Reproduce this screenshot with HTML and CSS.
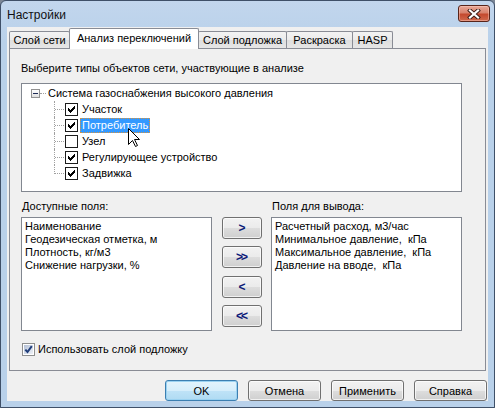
FILE: index.html
```html
<!DOCTYPE html>
<html lang="ru">
<head>
<meta charset="utf-8">
<title>Настройки</title>
<link rel="stylesheet" href="styles.css">
</head>
<body>
<div class="window">
  <div class="titlebar">
    <span class="title">Настройки</span>
    <span class="close-btn">
      <svg width="14" height="10" viewBox="0 0 14 10"><path d="M3 1.5 L11 8.5 M11 1.5 L3 8.5" stroke="#3a1a14" stroke-width="4" stroke-linecap="square"/><path d="M3 1.5 L11 8.5 M11 1.5 L3 8.5" stroke="#fff" stroke-width="2.2" stroke-linecap="square"/></svg>
    </span>
  </div>
  <div class="client">
    <div class="tabs">
      <div class="tab t1">Слой сети</div>
      <div class="tab t2 active">Анализ переключений</div>
      <div class="tab t3">Слой подложка</div>
      <div class="tab t4">Раскраска</div>
      <div class="tab t5">HASP</div>
    </div>
    <div class="panel">
      <div class="caption">Выберите типы объектов сети, участвующие в анализе</div>
      <div class="tree">
        <div class="tree-root">
          <span class="expander"><span class="minus"></span></span>
          <span class="root-dots"></span>
          <span class="node-label">Система газоснабжения высокого давления</span>
        </div>
        <ul class="tree-children">
          <li class="tree-node"><span class="branch"></span><svg class="chk" width="13" height="13" viewBox="0 0 13 13" shape-rendering="crispEdges"><rect x="0.5" y="0.5" width="12" height="12" fill="#fff" stroke="#1c1c1c"/><path d="M9,3h1v1h-1z M8,4h2v1h-2z M3,5h1v1h-1z M7,5h3v1h-3z M3,6h2v1h-2z M6,6h3v1h-3z M3,7h5v1h-5z M4,8h3v1h-3z M5,9h1v1h-1z" fill="#000"/></svg><span class="node-label">Участок</span></li>
          <li class="tree-node"><span class="branch"></span><svg class="chk" width="13" height="13" viewBox="0 0 13 13" shape-rendering="crispEdges"><rect x="0.5" y="0.5" width="12" height="12" fill="#fff" stroke="#1c1c1c"/><path d="M9,3h1v1h-1z M8,4h2v1h-2z M3,5h1v1h-1z M7,5h3v1h-3z M3,6h2v1h-2z M6,6h3v1h-3z M3,7h5v1h-5z M4,8h3v1h-3z M5,9h1v1h-1z" fill="#000"/></svg><span class="node-label selected">Потребитель</span></li>
          <li class="tree-node"><span class="branch"></span><svg class="chk" width="13" height="13" viewBox="0 0 13 13" shape-rendering="crispEdges"><rect x="0.5" y="0.5" width="12" height="12" fill="#fff" stroke="#1c1c1c"/></svg><span class="node-label">Узел</span></li>
          <li class="tree-node"><span class="branch"></span><svg class="chk" width="13" height="13" viewBox="0 0 13 13" shape-rendering="crispEdges"><rect x="0.5" y="0.5" width="12" height="12" fill="#fff" stroke="#1c1c1c"/><path d="M9,3h1v1h-1z M8,4h2v1h-2z M3,5h1v1h-1z M7,5h3v1h-3z M3,6h2v1h-2z M6,6h3v1h-3z M3,7h5v1h-5z M4,8h3v1h-3z M5,9h1v1h-1z" fill="#000"/></svg><span class="node-label">Регулирующее устройство</span></li>
          <li class="tree-node last"><span class="branch"></span><svg class="chk" width="13" height="13" viewBox="0 0 13 13" shape-rendering="crispEdges"><rect x="0.5" y="0.5" width="12" height="12" fill="#fff" stroke="#1c1c1c"/><path d="M9,3h1v1h-1z M8,4h2v1h-2z M3,5h1v1h-1z M7,5h3v1h-3z M3,6h2v1h-2z M6,6h3v1h-3z M3,7h5v1h-5z M4,8h3v1h-3z M5,9h1v1h-1z" fill="#000"/></svg><span class="node-label">Задвижка</span></li>
        </ul>
        <svg class="cursor" width="13" height="20" viewBox="0 0 13 20"><path d="M0.5 0.5 V16.5 L4.5 12.5 L7.5 18.5 L9.5 17.5 L6.5 11.5 H11.5 Z" fill="#fff" stroke="#000" stroke-linejoin="miter"/></svg>
      </div>
      <div class="fields">
        <div class="field-col">
          <div class="field-label">Доступные поля:</div>
          <div class="listbox">
            <div class="list-item">Наименование</div>
            <div class="list-item">Геодезическая отметка, м</div>
            <div class="list-item">Плотность, кг/м3</div>
            <div class="list-item">Снижение нагрузки, %</div>
          </div>
        </div>
        <div class="move-buttons">
          <span class="btn move">&gt;</span>
          <span class="btn move dbl">&gt;&gt;</span>
          <span class="btn move">&lt;</span>
          <span class="btn move dbl">&lt;&lt;</span>
        </div>
        <div class="field-col">
          <div class="field-label">Поля для вывода:</div>
          <div class="listbox">
            <div class="list-item">Расчетный расход, м3/час</div>
            <div class="list-item">Минимальное давление,&nbsp; кПа</div>
            <div class="list-item">Максимальное давление,&nbsp; кПа</div>
            <div class="list-item">Давление на вводе,&nbsp; кПа</div>
          </div>
        </div>
      </div>
      <div class="use-layer">
        <svg class="chk7" width="13" height="13" viewBox="0 0 13 13">
          <defs><linearGradient id="cg" x1="0" y1="0" x2="1" y2="1"><stop offset="0" stop-color="#b4c0d6"/><stop offset="1" stop-color="#eef2f8"/></linearGradient></defs>
          <rect x="0.5" y="0.5" width="12" height="12" fill="#fff" stroke="#8e8f8f"/>
          <rect x="2" y="2" width="9" height="9" fill="url(#cg)"/>
          <path d="M3.3 6.6 L5.5 9 L9.8 3.2" fill="none" stroke="#1f3d7a" stroke-width="2"/>
        </svg>
        <span>Использовать слой подложку</span>
      </div>
    </div>
    <div class="dialog-buttons">
      <span class="btn dlg default">OK</span>
      <span class="btn dlg">Отмена</span>
      <span class="btn dlg">Применить</span>
      <span class="btn dlg">Справка</span>
    </div>
  </div>
</div>
</body>
</html>
```
FILE: styles.css
```css
* { box-sizing: border-box; }
html, body { margin: 0; padding: 0; }
body {
  width: 495px;
  height: 408px;
  overflow: hidden;
  background: #7c8796;
  font-family: "Liberation Sans", Arial, sans-serif;
  font-size: 11px;
  color: #000;
}
.window {
  width: 495px;
  height: 408px;
  border: 1px solid #3f5068;
  border-radius: 6px 6px 0 0;
  background: linear-gradient(#c2d6ed, #b9d1ea 40px, #b9d1ea);
  padding: 0 6px 6px 6px;
  display: flex;
  flex-direction: column;
}
.titlebar {
  height: 26px;
  display: flex;
  justify-content: space-between;
  align-items: flex-start;
  flex-shrink: 0;
}
.title {
  font-size: 12px;
  line-height: 14px;
  margin-top: 7px;
  color: #111;
}
.close-btn {
  margin-top: 4px;
  margin-right: -2px;
  width: 32px;
  height: 17px;
  border: 1px solid #58241a;
  border-radius: 3px;
  background: linear-gradient(#e9a797 0%, #d8826d 45%, #c4492e 55%, #d0694d 100%);
  box-shadow: inset 0 0 0 1px rgba(255, 210, 200, 0.45);
  display: flex;
  align-items: center;
  justify-content: center;
}
.client {
  flex: 1;
  background: #f0f0f0;
  padding: 0 2px;
  display: flex;
  flex-direction: column;
}
.tabs {
  height: 21px;
  display: flex;
  align-items: flex-end;
  flex-shrink: 0;
}
.tab {
  height: 17px;
  border: 1px solid #898c95;
  border-bottom: none;
  border-radius: 2px 2px 0 0;
  background: linear-gradient(#f3f3f3 0%, #ebebeb 50%, #dedede 51%, #e6e6e6 100%);
  text-align: center;
  line-height: 16px;
  white-space: nowrap;
}
.tab + .tab { margin-left: -1px; }
.t1 { width: 61px; }
.t2 { width: 130px; }
.t3 { width: 89px; }
.t4 { width: 67px; }
.t5 { width: 41px; }
.tab.active {
  height: 21px;
  margin-bottom: -1px;
  background: #fff;
  position: relative;
  z-index: 1;
  line-height: 18px;
}
.panel {
  height: 323px;
  border: 1px solid #898c95;
  background: #f0f0f0;
  padding: 13px 0 0 11px;
  flex-shrink: 0;
}
.caption { line-height: 13px; }
.tree {
  position: relative;
  margin-top: 8px;
  width: 441px;
  height: 109px;
  border: 1px solid #828790;
  background: #fff;
  padding-top: 1px;
}
.tree-root {
  height: 16px;
  display: flex;
  align-items: center;
  padding-left: 9px;
}
.expander {
  width: 9px;
  height: 9px;
  border: 1px solid #919191;
  background: linear-gradient(#ffffff, #dedede);
  display: flex;
  align-items: center;
  justify-content: center;
}
.minus {
  width: 5px;
  height: 1px;
  background: #1d2a55;
}
.root-dots {
  width: 6px;
  border-top: 1px dotted #a0a0a0;
}
.tree-children {
  list-style: none;
  margin: 0;
  padding: 0;
}
.tree-node {
  height: 16px;
  display: flex;
  align-items: center;
  padding-left: 32px;
}
.branch {
  width: 11px;
  height: 16px;
  border-left: 1px dotted #a0a0a0;
  display: flex;
  align-items: center;
  align-self: flex-start;
}
.branch::after {
  content: "";
  width: 9px;
  border-top: 1px dotted #a0a0a0;
}
.tree-node.last .branch {
  height: 9px;
  align-items: flex-end;
}
.chk { flex-shrink: 0; display: block; }
.node-label {
  height: 15px;
  line-height: 13px;
  padding: 0 1px;
  border: 1px solid transparent;
  white-space: nowrap;
}
.tree-node .node-label { margin-left: 2px; }
.node-label.selected {
  background: #3399ff;
  color: #fff;
  border: 1px dotted #d8923c;
}
.cursor {
  position: absolute;
  left: 106px;
  top: 44px;
}
.fields {
  display: flex;
  align-items: flex-end;
  margin-top: 8px;
}
.field-col {
  width: 191px;
  display: flex;
  flex-direction: column;
  gap: 4px;
}
.field-label {
  line-height: 13px;
  padding-left: 1px;
}
.listbox {
  height: 114px;
  border: 1px solid #828790;
  background: #fff;
  padding: 2px 3px 0;
}
.list-item {
  line-height: 13px;
  white-space: nowrap;
}
.move-buttons {
  width: 40px;
  height: 114px;
  margin: 0 9px 0 10px;
  display: flex;
  flex-direction: column;
}
.btn {
  display: flex;
  align-items: center;
  justify-content: center;
  border: 1px solid #707070;
  border-radius: 3px;
  background: linear-gradient(#f2f2f2 0%, #ebebeb 50%, #dddddd 51%, #cfcfcf 100%);
  box-shadow: inset 0 0 0 1px rgba(255, 255, 255, 0.7);
}
.move {
  height: 22px;
  font-weight: bold;
  font-size: 12px;
  color: #0c1a78;
}
.move:nth-child(2) { margin-top: 7px; }
.move:nth-child(3) { margin-top: 8px; }
.move:nth-child(4) { margin-top: 7px; }
.move.dbl { letter-spacing: -2px; padding-right: 2px; }
.use-layer {
  margin-top: 12px;
  display: flex;
  align-items: center;
  gap: 3px;
  padding-left: 1px;
  line-height: 13px;
}
.chk7 { display: block; }
.dialog-buttons {
  margin-top: 9px;
  margin-right: -1px;
  display: flex;
  justify-content: flex-end;
  gap: 10px;
}
.dlg {
  width: 73px;
  height: 21px;
}
.dlg.default {
  border-color: #3c7fb1;
  background: linear-gradient(#e3f4fc 0%, #d6eefb 50%, #bfe3f7 51%, #b0dbf3 100%);
  box-shadow: inset 0 0 0 1px #9bd2f1;
}
```
